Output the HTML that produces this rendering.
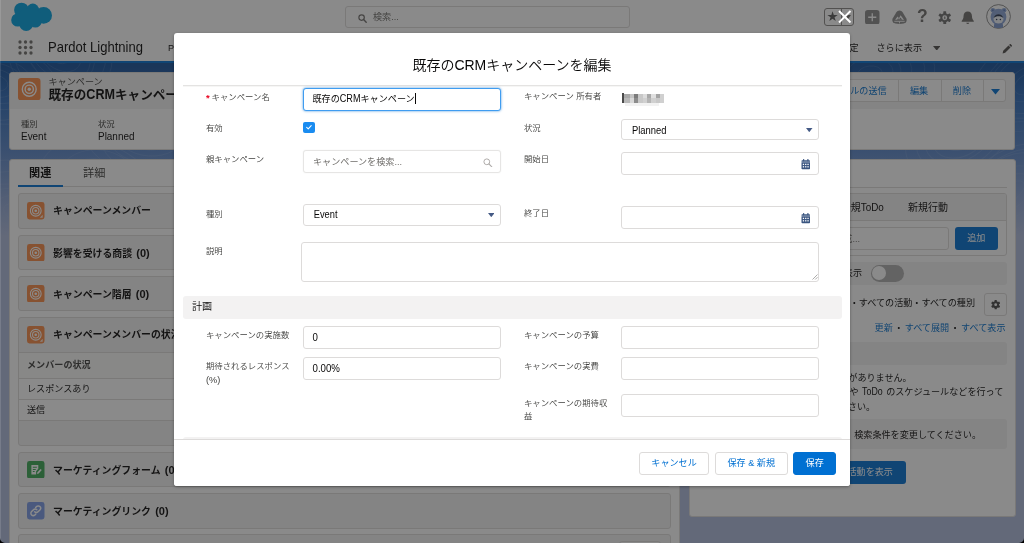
<!DOCTYPE html>
<html lang="ja">
<head>
<meta charset="utf-8">
<title>既存のCRMキャンペーンを編集</title>
<style>
*{box-sizing:border-box;margin:0;padding:0}
html,body{width:1024px;height:543px;overflow:hidden}
body{position:relative;background:#aebbdc;font-family:"Liberation Sans","Noto Sans CJK JP",sans-serif;color:#080707;font-size:9.1px;line-height:1.5}
.a{position:absolute;white-space:nowrap}
svg{display:block}
/* ---------- background page ---------- */
#page{position:absolute;left:0;top:0;width:1024px;height:543px;overflow:hidden;will-change:transform;font-weight:400}
#band{position:absolute;left:0;top:61px;width:1024px;height:482px;background:linear-gradient(to bottom,#16509a 0px,#16509a 6px,#2f6cba 40px,#5a86c8 90px,#8ea5d4 140px,#aebbdc 176px,#aebbdc 100%)}
#ghead{position:absolute;left:0;top:0;width:1024px;height:33px;background:#fff}
#nav{position:absolute;left:0;top:33px;width:1024px;height:30px;background:#fff;border-bottom:2.2px solid #0070d2}
.card{position:absolute;background:#fff;border-radius:3px;border:1px solid #dddbda}
.rl{position:absolute;left:18px;width:653px;background:#f3f2f2;border:1px solid #dddbda;border-radius:3px}
.rl .ic{position:absolute;left:8px;top:8px;width:17.5px;height:17.5px;border-radius:2.5px}
.rl .t{position:absolute;left:34px;top:9px;font-size:9.9px;word-spacing:1.5px;font-weight:700;line-height:16px;white-space:nowrap;color:#080707}
.lnk{color:#006dcc;font-weight:400}
.L{display:inline-block;transform:scaleY(1.12);transform-origin:0 78%}
/* ---------- modal ---------- */
#backdrop{position:absolute;left:0;top:0;width:1024px;height:543px;background:rgba(30,30,30,.52)}
#modal{will-change:transform;font-weight:350;position:absolute;left:174px;top:33px;width:676px;height:453px;background:#fff;border-radius:3px;overflow:hidden;box-shadow:0 1px 3px rgba(0,0,0,.35)}
.lab{position:absolute;font-size:8.4px;line-height:12.8px;color:#3e3e3c;white-space:nowrap}
.inp{font-weight:400;position:absolute;background:#fff;border:1px solid #dddbda;border-radius:3px;font-size:9.1px;line-height:20px;color:#080707;white-space:nowrap;padding-left:9px}
.btn{font-weight:400;position:absolute;top:419px;height:22.6px;border:1px solid #dddbda;border-radius:3px;background:#fff;color:#0070d2;font-size:9.1px;line-height:20.6px;text-align:center;white-space:nowrap}
</style>
</head>
<body>
<div id="page">
<div id="band"></div>
<svg class="a" style="left:0;top:63px;opacity:.085" width="1024" height="190" viewBox="0 0 1024 190"><defs><linearGradient id="fd" gradientUnits="userSpaceOnUse" x1="0" y1="0" x2="0" y2="190"><stop offset="0" stop-color="#fff"/><stop offset=".5" stop-color="#fff"/><stop offset="1" stop-color="#fff" stop-opacity="0"/></linearGradient></defs><g fill="none" stroke="url(#fd)" stroke-width=".9"><ellipse cx="-5" cy="20" rx="13" ry="8" transform="rotate(12 -5 20)"/><ellipse cx="-5" cy="20" rx="22" ry="14" transform="rotate(12 -5 20)"/><ellipse cx="-5" cy="20" rx="32" ry="20" transform="rotate(12 -5 20)"/><ellipse cx="-5" cy="20" rx="40" ry="26" transform="rotate(12 -5 20)"/><ellipse cx="-5" cy="20" rx="46" ry="37" transform="rotate(12 -5 20)"/><ellipse cx="-5" cy="20" rx="65" ry="40" transform="rotate(12 -5 20)"/><ellipse cx="60" cy="-10" rx="12" ry="10" transform="rotate(36 60 -10)"/><ellipse cx="60" cy="-10" rx="23" ry="16" transform="rotate(36 60 -10)"/><ellipse cx="60" cy="-10" rx="33" ry="24" transform="rotate(36 60 -10)"/><ellipse cx="60" cy="-10" rx="37" ry="29" transform="rotate(36 60 -10)"/><ellipse cx="60" cy="-10" rx="47" ry="44" transform="rotate(36 60 -10)"/><ellipse cx="60" cy="-10" rx="54" ry="49" transform="rotate(36 60 -10)"/><ellipse cx="150" cy="70" rx="15" ry="9" transform="rotate(4 150 70)"/><ellipse cx="150" cy="70" rx="24" ry="17" transform="rotate(4 150 70)"/><ellipse cx="150" cy="70" rx="34" ry="23" transform="rotate(4 150 70)"/><ellipse cx="150" cy="70" rx="44" ry="31" transform="rotate(4 150 70)"/><ellipse cx="150" cy="70" rx="51" ry="42" transform="rotate(4 150 70)"/><ellipse cx="150" cy="70" rx="66" ry="43" transform="rotate(4 150 70)"/><ellipse cx="100" cy="130" rx="15" ry="10" transform="rotate(30 100 130)"/><ellipse cx="100" cy="130" rx="26" ry="16" transform="rotate(30 100 130)"/><ellipse cx="100" cy="130" rx="33" ry="26" transform="rotate(30 100 130)"/><ellipse cx="100" cy="130" rx="40" ry="32" transform="rotate(30 100 130)"/><ellipse cx="100" cy="130" rx="47" ry="42" transform="rotate(30 100 130)"/><ellipse cx="100" cy="130" rx="66" ry="48" transform="rotate(30 100 130)"/><ellipse cx="20" cy="150" rx="17" ry="9" transform="rotate(16 20 150)"/><ellipse cx="20" cy="150" rx="26" ry="17" transform="rotate(16 20 150)"/><ellipse cx="20" cy="150" rx="39" ry="23" transform="rotate(16 20 150)"/><ellipse cx="20" cy="150" rx="47" ry="27" transform="rotate(16 20 150)"/><ellipse cx="20" cy="150" rx="57" ry="40" transform="rotate(16 20 150)"/><ellipse cx="20" cy="150" rx="72" ry="51" transform="rotate(16 20 150)"/><ellipse cx="700" cy="-5" rx="12" ry="9" transform="rotate(13 700 -5)"/><ellipse cx="700" cy="-5" rx="21" ry="15" transform="rotate(13 700 -5)"/><ellipse cx="700" cy="-5" rx="29" ry="26" transform="rotate(13 700 -5)"/><ellipse cx="700" cy="-5" rx="37" ry="29" transform="rotate(13 700 -5)"/><ellipse cx="700" cy="-5" rx="49" ry="43" transform="rotate(13 700 -5)"/><ellipse cx="700" cy="-5" rx="53" ry="46" transform="rotate(13 700 -5)"/><ellipse cx="780" cy="60" rx="14" ry="11" transform="rotate(26 780 60)"/><ellipse cx="780" cy="60" rx="24" ry="18" transform="rotate(26 780 60)"/><ellipse cx="780" cy="60" rx="36" ry="29" transform="rotate(26 780 60)"/><ellipse cx="780" cy="60" rx="40" ry="31" transform="rotate(26 780 60)"/><ellipse cx="780" cy="60" rx="49" ry="38" transform="rotate(26 780 60)"/><ellipse cx="780" cy="60" rx="62" ry="50" transform="rotate(26 780 60)"/><ellipse cx="870" cy="10" rx="12" ry="7" transform="rotate(-6 870 10)"/><ellipse cx="870" cy="10" rx="23" ry="15" transform="rotate(-6 870 10)"/><ellipse cx="870" cy="10" rx="31" ry="23" transform="rotate(-6 870 10)"/><ellipse cx="870" cy="10" rx="42" ry="26" transform="rotate(-6 870 10)"/><ellipse cx="870" cy="10" rx="55" ry="40" transform="rotate(-6 870 10)"/><ellipse cx="870" cy="10" rx="65" ry="49" transform="rotate(-6 870 10)"/><ellipse cx="960" cy="70" rx="13" ry="9" transform="rotate(-32 960 70)"/><ellipse cx="960" cy="70" rx="21" ry="16" transform="rotate(-32 960 70)"/><ellipse cx="960" cy="70" rx="30" ry="23" transform="rotate(-32 960 70)"/><ellipse cx="960" cy="70" rx="38" ry="27" transform="rotate(-32 960 70)"/><ellipse cx="960" cy="70" rx="47" ry="34" transform="rotate(-32 960 70)"/><ellipse cx="960" cy="70" rx="59" ry="39" transform="rotate(-32 960 70)"/><ellipse cx="1030" cy="20" rx="17" ry="10" transform="rotate(-28 1030 20)"/><ellipse cx="1030" cy="20" rx="26" ry="16" transform="rotate(-28 1030 20)"/><ellipse cx="1030" cy="20" rx="38" ry="28" transform="rotate(-28 1030 20)"/><ellipse cx="1030" cy="20" rx="45" ry="32" transform="rotate(-28 1030 20)"/><ellipse cx="1030" cy="20" rx="50" ry="35" transform="rotate(-28 1030 20)"/><ellipse cx="1030" cy="20" rx="62" ry="44" transform="rotate(-28 1030 20)"/><ellipse cx="1010" cy="130" rx="17" ry="8" transform="rotate(-38 1010 130)"/><ellipse cx="1010" cy="130" rx="25" ry="15" transform="rotate(-38 1010 130)"/><ellipse cx="1010" cy="130" rx="33" ry="23" transform="rotate(-38 1010 130)"/><ellipse cx="1010" cy="130" rx="49" ry="34" transform="rotate(-38 1010 130)"/><ellipse cx="1010" cy="130" rx="57" ry="35" transform="rotate(-38 1010 130)"/><ellipse cx="1010" cy="130" rx="62" ry="40" transform="rotate(-38 1010 130)"/><ellipse cx="900" cy="140" rx="16" ry="10" transform="rotate(22 900 140)"/><ellipse cx="900" cy="140" rx="27" ry="19" transform="rotate(22 900 140)"/><ellipse cx="900" cy="140" rx="37" ry="26" transform="rotate(22 900 140)"/><ellipse cx="900" cy="140" rx="48" ry="34" transform="rotate(22 900 140)"/><ellipse cx="900" cy="140" rx="51" ry="40" transform="rotate(22 900 140)"/><ellipse cx="900" cy="140" rx="62" ry="40" transform="rotate(22 900 140)"/><ellipse cx="690" cy="120" rx="10" ry="8" transform="rotate(-19 690 120)"/><ellipse cx="690" cy="120" rx="20" ry="17" transform="rotate(-19 690 120)"/><ellipse cx="690" cy="120" rx="32" ry="26" transform="rotate(-19 690 120)"/><ellipse cx="690" cy="120" rx="38" ry="28" transform="rotate(-19 690 120)"/><ellipse cx="690" cy="120" rx="45" ry="35" transform="rotate(-19 690 120)"/><ellipse cx="690" cy="120" rx="53" ry="48" transform="rotate(-19 690 120)"/><ellipse cx="740" cy="170" rx="17" ry="11" transform="rotate(-2 740 170)"/><ellipse cx="740" cy="170" rx="25" ry="19" transform="rotate(-2 740 170)"/><ellipse cx="740" cy="170" rx="39" ry="28" transform="rotate(-2 740 170)"/><ellipse cx="740" cy="170" rx="48" ry="34" transform="rotate(-2 740 170)"/><ellipse cx="740" cy="170" rx="51" ry="45" transform="rotate(-2 740 170)"/><ellipse cx="740" cy="170" rx="62" ry="53" transform="rotate(-2 740 170)"/></g></svg>
<!-- ===== global header ===== -->
<div id="ghead">

<svg class="a" style="left:6px;top:0" width="52" height="34" viewBox="6 0 52 34"><g fill="#00a1e0"><circle cx="21.500" cy="10.100" r="7.400"/><circle cx="32.800" cy="9.800" r="6.200"/><circle cx="43.600" cy="15.400" r="8.400"/><circle cx="17.800" cy="20" r="6.600"/><circle cx="26.200" cy="24.300" r="6.800"/><circle cx="35.400" cy="21.200" r="6.300"/><ellipse cx="30" cy="17" rx="12" ry="8.500"/></g></svg>
<div class="a" style="left:345px;top:6px;width:285px;height:22px;border:1px solid #dddbda;border-radius:3px;background:#fff"></div>
<svg class="a" style="left:357.5px;top:13.5px" width="9" height="9" viewBox="0 0 9 9"><circle cx="3.6" cy="3.6" r="2.7" fill="none" stroke="#706e6b" stroke-width="1.2"/><path d="M5.6 5.6L8.2 8.2" stroke="#706e6b" stroke-width="1.4" stroke-linecap="round"/></svg>
<div class="a" style="left:373px;top:10px;font-size:9.1px;line-height:14px;color:#706e6b">検索...</div>
<!-- favorites -->
<div class="a" style="left:824px;top:8px;width:30px;height:17.5px;border:1px solid #8a8886;border-radius:3px"></div>
<div class="a" style="left:826.500px;top:8.300px;font-size:13.500px;line-height:16px;color:#5a5a5a;font-family:'DejaVu Sans',sans-serif">★</div>
<div class="a" style="left:841px;top:8px;width:1px;height:17.5px;background:#8a8886"></div>
<svg class="a" style="left:845px;top:14.5px" width="6" height="4" viewBox="0 0 6 4"><path d="M0 0h6L3 4z" fill="#706e6b"/></svg>
<!-- plus -->
<svg class="a" style="left:865px;top:9.5px" width="14.5" height="14.5" viewBox="0 0 14.5 14.5"><rect width="14.5" height="14.5" rx="2.8" fill="#8a8a8a"/><path d="M7.25 3.2v8.100M3.200 7.250h8.100" stroke="#fff" stroke-width="1.300"/></svg>
<!-- trailhead -->
<svg class="a" style="left:892px;top:10px" width="15" height="14.500" viewBox="0 0 15 14.500"><path d="M7.500 .4c1.300 0 2.300.7 3.100 1.900l3.600 5.900c1.200 2.100.1 4.800-2.500 5.300-2.800.5-5.600.5-8.400 0C.7 13 -.4 10.300.8 8.200l3.600-5.900C5.200 1.100 6.200.4 7.500.4z" fill="#8a8a8a"/><path d="M3.100 9.800l2.500-3.300 1.400 1.700 1.600-2.900 3.400 4.500z" fill="#fff"/><path d="M4.900 9.800l1.300-1.500.9 1 1.400-1.900 1.700 2.400z" fill="#8a8a8a"/><path d="M2.300 11.300h10.400" stroke="#fff" stroke-width=".9"/><path d="M7.500 11.500v2" stroke="#fff" stroke-width=".8"/></svg>
<!-- help -->
<div class="a" style="left:917px;top:5px;font-size:17.5px;line-height:22px;color:#706e6b;font-weight:700">?</div>
<!-- gear -->
<svg class="a" style="left:938px;top:10.500px" width="13.500" height="13.500" viewBox="-7 -7 14 14"><g fill="#707070"><circle r="4.600"/><g id="tt"><rect x="-1.500" y="-6.800" width="3" height="13.600" rx=".6"/></g><use href="#tt" transform="rotate(60)"/><use href="#tt" transform="rotate(120)"/></g><circle r="2.500" fill="#fff"/><path d="M0 -1.500v3M-.9 .2h1.800" stroke="#706e6b" stroke-width=".8"/></svg>
<!-- bell -->
<svg class="a" style="left:960.500px;top:10.500px" width="13.500" height="14" viewBox="0 0 13.500 14"><path d="M6.750 .6c-2.600 0-4.200 2-4.200 4.500 0 2.700-.9 3.900-1.900 4.800-.3.300-.1.900.4.900h11.400c.5 0 .7-.6.4-.9-1-.9-1.900-2.100-1.900-4.800 0-2.500-1.600-4.500-4.200-4.500z" fill="#706e6b"/><path d="M5.200 11.800a1.600 1.600 0 0 0 3.100 0z" fill="#706e6b"/></svg>
<!-- avatar -->
<svg class="a" style="left:986px;top:3.500px" width="25" height="25" viewBox="0 0 25 25"><defs><clipPath id="avc"><circle cx="12.500" cy="12.500" r="11.600"/></clipPath></defs><circle cx="12.500" cy="12.500" r="11.900" fill="#fff" stroke="#6e6e6e" stroke-width=".8"/><g clip-path="url(#avc)"><circle cx="6.900" cy="6.300" r="2.300" fill="#8aa4d6"/><circle cx="18.100" cy="6.300" r="2.300" fill="#8aa4d6"/><circle cx="6.900" cy="6.300" r="1" fill="#5f7cb6"/><circle cx="18.100" cy="6.300" r="1" fill="#5f7cb6"/><ellipse cx="12.500" cy="13" rx="7.900" ry="8.200" fill="#8aa4d6"/><rect x="8" y="19" width="9" height="6" rx="2" fill="#7b97cc"/><ellipse cx="12.500" cy="15" rx="5" ry="4.500" fill="#eef2f9"/><path d="M7.600 14.200c.6-2.700 2.500-4 4.900-4s4.300 1.300 4.900 4c-1.300-1.300-3-1.900-4.900-1.900s-3.600.6-4.900 1.900z" fill="#26344f"/><circle cx="10.600" cy="15.600" r=".75" fill="#26344f"/><circle cx="14.400" cy="15.600" r=".75" fill="#26344f"/></g></svg>

</div>
<!-- ===== nav ===== -->
<div id="nav">

<svg class="a" style="left:17.500px;top:6.800px" width="15" height="15" viewBox="0 0 15 15"><g fill="#706e6b"><circle cx="2" cy="2" r="1.650"/><circle cx="7.500" cy="2" r="1.650"/><circle cx="13" cy="2" r="1.650"/><circle cx="2" cy="7.500" r="1.650"/><circle cx="7.500" cy="7.500" r="1.650"/><circle cx="13" cy="7.500" r="1.650"/><circle cx="2" cy="13" r="1.650"/><circle cx="7.500" cy="13" r="1.650"/><circle cx="13" cy="13" r="1.650"/></g></svg>
<div class="a" id="appname" style="left:48px;top:5px;font-size:13.050px;line-height:20px;color:#080707"><span class="L" style="transform:scaleY(1.07)">Pardot Lightning</span></div>
<div class="a" style="left:168px;top:8px;font-size:9.1px;line-height:14px;color:#080707">P</div>
<div class="a" style="left:840.500px;top:8px;font-size:9.1px;line-height:14px;color:#080707">設定</div>
<div class="a" style="left:876.500px;top:8px;font-size:9.1px;line-height:14px;color:#080707">さらに表示</div>
<svg class="a" style="left:932.500px;top:12.500px" width="7.500" height="4.600" viewBox="0 0 7.500 4.600"><path d="M0 0h7.500L3.750 4.600z" fill="#514f4d"/></svg>
<svg class="a" style="left:1002px;top:10.500px" width="10" height="10" viewBox="0 0 10 10"><path d="M.6 9.400l.6-2.600 5.300-5.300 2 2-5.300 5.300zM7.100 .9l.700-.7c.3-.3.700-.3 1 0l1 1c.3.300.3.700 0 1l-.7.700z" fill="#514f4d"/></svg>

</div>

<!-- ===== record header ===== -->
<div class="card" style="left:9px;top:72px;width:1006px;height:78px;overflow:hidden">
<div class="a" style="left:0;top:0;width:1006px;height:36px;background:#f3f2f2"></div>
<div class="a" style="left:8px;top:4.500px"><svg width="22.500" height="22.500" viewBox="0 0 24 24"><rect width="24" height="24" rx="3.4" fill="#f98a45"/><g fill="none" stroke="#fff" stroke-width="1.500"><circle cx="12" cy="12" r="7.400"/><circle cx="12" cy="12" r="4.400"/></g><circle cx="12" cy="12" r="1.800" fill="#fff"/></svg></div>
<div class="a" style="left:38.500px;top:3px;font-size:9.1px;line-height:13px;color:#3e3e3c">キャンペーン</div>
<div class="a" style="left:38.500px;top:12.500px;font-size:12.6px;line-height:19px;font-weight:700;color:#080707">既存の<span class="L">CRM</span>キャンペーン</div>
<div class="a" style="left:790px;top:5.500px;width:206px;height:23.500px;border:1px solid #dddbda;border-radius:3px;background:#fff"></div>
<div class="a lnk" style="left:822px;top:10.800px;font-size:9.1px;line-height:14px">メールの送信</div>
<div class="a" style="left:887.500px;top:6px;width:1px;height:22.500px;background:#dddbda"></div>
<div class="a lnk" style="left:900px;top:10.800px;font-size:9.1px;line-height:14px">編集</div>
<div class="a" style="left:930.500px;top:6px;width:1px;height:22.500px;background:#dddbda"></div>
<div class="a lnk" style="left:942.800px;top:10.800px;font-size:9.1px;line-height:14px">削除</div>
<div class="a" style="left:973px;top:6px;width:1px;height:22.500px;background:#dddbda"></div>
<svg class="a" style="left:981px;top:16px" width="9" height="5.600" viewBox="0 0 9 5.600"><path d="M0 0h9L4.500 5.600z" fill="#0070d2"/></svg>
<div class="a" style="left:11px;top:44.500px;font-size:8.4px;line-height:12px;color:#3e3e3c">種別</div>
<div class="a" style="left:11px;top:57px;font-size:9.950px;line-height:14px;color:#080707"><span class="L">Event</span></div>
<div class="a" style="left:88px;top:44.500px;font-size:8.4px;line-height:12px;color:#3e3e3c">状況</div>
<div class="a" style="left:88px;top:57px;font-size:9.950px;line-height:14px;color:#080707"><span class="L">Planned</span></div>
</div>


<!-- ===== left column ===== -->
<div class="card" style="left:9px;top:159px;width:671px;height:400px"></div>
<div class="a" style="left:18px;top:186px;width:653px;height:1px;background:#dddbda"></div>
<div class="a" style="left:18px;top:184.600px;width:44.500px;height:2.100px;background:#0070d2"></div>
<div class="a" style="left:29px;top:165px;font-size:11.2px;line-height:17px;font-weight:700;color:#080707">関連</div>
<div class="a" style="left:83px;top:165px;font-size:11.2px;line-height:17px;color:#3e3e3c">詳細</div>
<div class="rl" style="top:193px;height:35.5px"><div class="ic"><svg width="17.500" height="17.500" viewBox="0 0 24 24"><rect width="24" height="24" rx="3.4" fill="#f98a45"/><g fill="none" stroke="#fff" stroke-width="1.500"><circle cx="12" cy="12" r="7.400"/><circle cx="12" cy="12" r="4.400"/></g><circle cx="12" cy="12" r="1.800" fill="#fff"/><path d="M17.500 21.500l4-4v4z" fill="#fff" opacity=".85"/></svg></div><div class="t">キャンペーンメンバー</div></div>
<div class="rl" style="top:234.8px;height:35.5px"><div class="ic"><svg width="17.500" height="17.500" viewBox="0 0 24 24"><rect width="24" height="24" rx="3.4" fill="#f98a45"/><g fill="none" stroke="#fff" stroke-width="1.500"><circle cx="12" cy="12" r="7.400"/><circle cx="12" cy="12" r="4.400"/></g><circle cx="12" cy="12" r="1.800" fill="#fff"/></svg></div><div class="t">影響を受ける商談 <span style="font-size:11px">(0)</span></div></div>
<div class="rl" style="top:275.8px;height:35.5px"><div class="ic"><svg width="17.500" height="17.500" viewBox="0 0 24 24"><rect width="24" height="24" rx="3.4" fill="#f98a45"/><g fill="none" stroke="#fff" stroke-width="1.500"><circle cx="12" cy="12" r="7.400"/><circle cx="12" cy="12" r="4.400"/></g><circle cx="12" cy="12" r="1.800" fill="#fff"/></svg></div><div class="t">キャンペーン階層 <span style="font-size:11px">(0)</span></div></div>
<div class="rl" style="top:317px;height:128.5px"><div class="ic"><svg width="17.500" height="17.500" viewBox="0 0 24 24"><rect width="24" height="24" rx="3.4" fill="#f98a45"/><g fill="none" stroke="#fff" stroke-width="1.500"><circle cx="12" cy="12" r="7.400"/><circle cx="12" cy="12" r="4.400"/></g><circle cx="12" cy="12" r="1.800" fill="#fff"/><path d="M17.500 21.500l4-4v4z" fill="#fff" opacity=".85"/></svg></div><div class="t">キャンペーンメンバーの状況</div><div class="a" style="left:0;top:34.300px;width:651px;height:26.700px;border-top:1px solid #dddbda;background:#fafaf9"></div>
<div class="a" style="left:8px;top:40.300px;font-size:9.1px;line-height:14px;font-weight:700;color:#3e3e3c">メンバーの状況</div>
<div class="a" style="left:0;top:60.300px;width:651px;height:21.700px;border-top:1px solid #dddbda;background:#fff"></div>
<div class="a" style="left:8px;top:63.800px;font-size:9.1px;line-height:14px;color:#080707">レスポンスあり</div>
<div class="a" style="left:0;top:81.300px;width:651px;height:21.700px;border-top:1px solid #dddbda;background:#fff"></div>
<div class="a" style="left:8px;top:84.800px;font-size:9.1px;line-height:14px;color:#080707">送信</div>
<div class="a" style="left:0;top:102px;width:651px;height:1px;background:#dddbda"></div></div>
<div class="rl" style="top:451.8px;height:35.5px"><div class="ic"><svg width="17.500" height="17.500" viewBox="0 0 24 24"><rect width="24" height="24" rx="3.400" fill="#3ba755"/><path d="M6 5.500h9.500v5l-3 3.500v4.500H6z" fill="#fff"/><path d="M8 8.500h5.500M8 11.500h4M8 14.500h2.500" stroke="#3ba755" stroke-width="1.400"/><path d="M13.800 17.800l.5-2.300 4.200-4.600 1.700 1.600-4.200 4.600z" fill="#fff"/></svg></div><div class="t">マーケティングフォーム <span style="font-size:11px">(0)</span></div></div>
<div class="rl" style="top:493px;height:35.5px"><div class="ic"><svg width="17.500" height="17.500" viewBox="0 0 24 24"><rect width="24" height="24" rx="3.400" fill="#7a9ae6"/><g fill="none" stroke="#fff" stroke-width="2" stroke-linecap="round"><path d="M10.500 13.500a3.200 3.200 0 0 0 4.600 0l2.600-2.600a3.200 3.200 0 0 0-4.600-4.600l-1.200 1.200"/><path d="M13.500 10.500a3.200 3.200 0 0 0-4.600 0l-2.600 2.600a3.200 3.200 0 0 0 4.600 4.600l1.200-1.200"/></g></svg></div><div class="t">マーケティングリンク <span style="font-size:11px">(0)</span></div></div>
<div class="rl" style="top:534.3px;height:35.5px"><div class="ic"></div><div class="t"></div></div>


<div class="a" style="left:619px;top:541px;width:42px;height:12px;border:1px solid #dddbda;border-radius:3px;background:#fff"></div>
<!-- ===== right column ===== -->
<div class="card" style="left:689px;top:159px;width:327px;height:357.5px"></div>
<div class="a" style="left:699px;top:187px;width:308px;height:1px;background:#dddbda"></div>
<div class="a" style="left:699px;top:193px;width:308px;height:62.500px;border:1px solid #dddbda;border-radius:3px;background:#fff;overflow:hidden">
<div class="a" style="left:0;top:0;width:306px;height:27px;background:#f3f2f2;border-bottom:1px solid #dddbda"></div>
<div class="a" style="left:140.800px;top:6.500px;font-size:10px;line-height:14px;color:#080707">新規<span class="L" style="font-size:9.9px;transform:scaleY(1.18)">ToDo</span></div>
<div class="a" style="left:208px;top:6.500px;font-size:10px;line-height:14px;color:#080707">新規行動</div>
<div class="a" style="left:8px;top:33px;width:241px;height:22.500px;border:1px solid #dddbda;border-radius:3px;background:#fff"></div>
<div class="a" style="right:146px;top:38px;font-size:9.1px;line-height:14px;color:#706e6b">ToDo を作成...</div>
<div class="a" style="left:255px;top:33px;width:42.500px;height:22.500px;border-radius:3px;background:#0070d2;color:#fff;font-size:9.1px;line-height:22.500px;text-align:center">追加</div>
</div>
<div class="a" style="left:699px;top:262px;width:308px;height:22.500px;border-radius:3px;background:#f3f2f2"></div>
<div class="a" style="right:162px;top:266px;font-size:9.1px;line-height:14px;color:#080707">検索条件を表示</div>
<div class="a" style="left:870.500px;top:264.800px;width:33.500px;height:16.800px;border-radius:9px;background:#adadad"></div>
<div class="a" style="left:872px;top:266.300px;width:13.800px;height:13.800px;border-radius:7px;background:#fff"></div>
<div class="a" style="right:49px;top:296px;font-size:9.1px;line-height:14px;color:#080707">検索条件: 常時・すべての活動・すべての種別</div>
<div class="a" style="left:983.800px;top:293.300px;width:23.200px;height:22.700px;border:1px solid #dddbda;border-radius:3px;background:#fff"></div>
<svg class="a" style="left:990.800px;top:300.300px" width="9.400" height="9.400" viewBox="-7 -7 14 14"><g fill="#4a4a4a"><circle r="5"/><rect x="-1.700" y="-6.900" width="3.400" height="13.800" rx=".8"/><rect x="-1.700" y="-6.900" width="3.400" height="13.800" rx=".8" transform="rotate(60)"/><rect x="-1.700" y="-6.900" width="3.400" height="13.800" rx=".8" transform="rotate(120)"/></g><circle r="2.100" fill="#fff"/></svg>
<div class="a" style="right:18.500px;top:320.500px;font-size:9.1px;line-height:14px;color:#080707"><span class="lnk">更新</span><span style="margin:0 1.4px">・</span><span class="lnk">すべて展開</span><span style="margin:0 1.4px">・</span><span class="lnk">すべて表示</span></div>
<div class="a" style="left:699px;top:342px;width:308px;height:22.500px;border-radius:3px;background:#f3f2f2"></div>
<div class="a" style="right:112.300px;top:372px;font-size:9.1px;line-height:13px;color:#080707">今後の活動がありません。</div>
<div class="a" style="right:20.700px;top:386.200px;font-size:9.1px;line-height:13px;color:#080707;word-spacing:1px">開始するには、メールの送信や <span class="L" style="font-size:8.8px;transform:scaleY(1.15)">ToDo</span> のスケジュールなどを行って</div>
<div class="a" style="right:148.900px;top:400.500px;font-size:9.1px;line-height:13px;color:#080707">ください。</div>
<div class="a" style="left:699px;top:418.500px;width:308px;height:30.500px;border-radius:3px;background:#f3f2f2"></div>
<div class="a" style="right:43px;top:427.800px;font-size:9.1px;line-height:14px;color:#080707;">過去の活動はありません。表示するには、検索条件を変更してください。</div>
<div class="a" style="left:799.500px;top:461px;width:106px;height:22.700px;border-radius:3px;background:#0070d2;color:#fff;font-size:9.1px;line-height:22.700px;text-align:center">すべての活動を表示</div>

</div>
<div id="backdrop"></div>

<svg class="a" style="left:838px;top:9.500px" width="13.500" height="13.500" viewBox="0 0 13.500 13.500"><path d="M1 1l11.500 11.500M12.500 1L1 12.500" stroke="#fff" stroke-width="1.900" stroke-linecap="butt"/></svg>

<div id="modal">

<div class="a" style="left:0;top:22px;width:676px;text-align:center;font-size:14px;line-height:20px;color:#080707">既存の<span class="L" style="transform:scaleY(1.04)">CRM</span>キャンペーンを編集</div>
<div class="a" style="left:9px;top:52px;width:659px;height:1px;background:#e4e3e2"></div><div class="a" style="left:9px;top:53px;width:659px;height:1px;background:#f6f6f5"></div>
<!-- row 1 -->
<div class="a" style="left:32px;top:59px;font-size:9.5px;line-height:12.800px;color:#ea001e;font-weight:700">*</div>
<div class="lab" style="left:37.600px;top:57.500px">キャンペーン名</div>
<div class="inp" style="left:129px;top:55px;width:198px;height:22.500px;line-height:20.600px;padding-left:8.500px;border-color:#3f9cf0;box-shadow:0 0 2.500px rgba(0,112,210,.75)">既存の<span class="L">CRM</span>キャンペーン<span style="display:inline-block;width:1px;height:11.500px;background:#080707;vertical-align:-2px;margin-left:.5px"></span></div>
<div class="lab" style="left:350px;top:57.400px">キャンペーン 所有者</div>
<div class="a" style="left:447.400px;top:60.200px;width:44px;height:13px;filter:blur(.4px)">
<div class="a" style="left:1.00px;top:0;width:1.4px;height:9.4px;background:#4a4a4a"></div>
<div class="a" style="left:2.50px;top:.6px;width:5.94px;height:8.800px;background:linear-gradient(#a8a8a8 50%,#b8b8b8 50%)"></div>
<div class="a" style="left:8.44px;top:.6px;width:4.06px;height:8.800px;background:linear-gradient(#c4c4c4 50%,#d8d8d8 50%)"></div>
<div class="a" style="left:12.50px;top:.6px;width:4.06px;height:8.800px;background:linear-gradient(#7c7c7c 50%,#8c8c8c 50%)"></div>
<div class="a" style="left:16.56px;top:.6px;width:5.00px;height:8.800px;background:linear-gradient(#c8c8c8 50%,#c8c8c8 50%)"></div>
<div class="a" style="left:21.56px;top:.6px;width:4.06px;height:8.800px;background:linear-gradient(#dcdcdc 50%,#d0d0d0 50%)"></div>
<div class="a" style="left:25.62px;top:.6px;width:4.06px;height:8.800px;background:linear-gradient(#a8a8a8 50%,#b4b4b4 50%)"></div>
<div class="a" style="left:29.69px;top:.6px;width:4.69px;height:8.800px;background:linear-gradient(#e0e0e0 50%,#d0d0d0 50%)"></div>
<div class="a" style="left:34.38px;top:.6px;width:4.06px;height:8.800px;background:linear-gradient(#a4a4a4 50%,#c8c8c8 50%)"></div>
<div class="a" style="left:38.44px;top:.6px;width:4.06px;height:8.800px;background:linear-gradient(#d0d0d0 50%,#d0d0d0 50%)"></div>
<div class="a" style="left:4px;top:10px;width:34px;height:2.500px;background:#f2f2f2"></div>
</div>
<!-- row 2 -->
<div class="lab" style="left:32px;top:88.500px">有効</div>
<div class="a" style="left:129px;top:88.700px;width:11.500px;height:11.500px;border-radius:2px;background:#1a8cf0"></div>
<svg class="a" style="left:131.900px;top:92.200px" width="5.800" height="4.600" viewBox="0 0 7 5.600"><path d="M.8 2.900l1.900 1.800L6.300 .8" fill="none" stroke="#fff" stroke-width="1.250" stroke-linecap="round" stroke-linejoin="round"/></svg>
<div class="lab" style="left:350px;top:88.600px">状況</div>
<div class="inp" style="left:447px;top:86.200px;width:198px;height:21.300px;line-height:21.600px;padding-left:10px;font-size:9.4px"><span class="L">Planned</span></div>
<svg class="a" style="left:632px;top:94.600px" width="6.500" height="4.200" viewBox="0 0 6.500 4.200"><path d="M0 0h6.500L3.250 4.200z" fill="#445a85"/></svg>
<!-- row 3 -->
<div class="lab" style="left:32px;top:120.400px">親キャンペーン</div>
<div class="inp" style="left:129px;top:117px;width:198px;height:23px;line-height:22px;color:#706e6b;border-color:#e6e5e4;box-shadow:0 0 1.500px rgba(0,0,0,.08)">キャンペーンを検索...</div>
<svg class="a" style="left:309px;top:124.500px" width="9.500" height="9.500" viewBox="0 0 9.500 9.500"><circle cx="3.800" cy="3.800" r="2.900" fill="none" stroke="#b0adab" stroke-width="1"/><path d="M6 6l2.800 2.800" stroke="#b0adab" stroke-width="1.100" stroke-linecap="round"/></svg>
<div class="lab" style="left:350px;top:119.800px">開始日</div>
<div class="inp" style="left:447px;top:119px;width:198px;height:22.500px"></div>
<svg class="a" style="left:626.700px;top:126.400px" width="9.500" height="10.500" viewBox="0 0 19 21"><path d="M1 6.500h17V19a1.500 1.500 0 0 1-1.500 1.500h-14A1.500 1.500 0 0 1 1 19z" fill="#3a5580"/><path d="M1 5.500V4A1.500 1.500 0 0 1 2.500 2.500h14A1.500 1.500 0 0 1 18 4v1.500z" fill="#3a5580"/><rect x="4" y="0" width="2.400" height="4.500" rx="1" fill="#3a5580"/><rect x="12.600" y="0" width="2.400" height="4.500" rx="1" fill="#3a5580"/><g fill="#fff"><rect x="3.600" y="9.500" width="2.600" height="2.600"/><rect x="8.200" y="9.500" width="2.600" height="2.600"/><rect x="12.800" y="9.500" width="2.600" height="2.600"/><rect x="3.600" y="14.300" width="2.600" height="2.600"/><rect x="8.200" y="14.300" width="2.600" height="2.600"/><rect x="12.800" y="14.300" width="2.600" height="2.600"/></g></svg>
<!-- row 4 -->
<div class="lab" style="left:32px;top:174.500px">種別</div>
<div class="inp" style="left:129px;top:171px;width:198px;height:22px;line-height:21.600px;padding-left:9.700px;font-size:9.3px"><span class="L">Event</span></div>
<svg class="a" style="left:313.800px;top:180.200px" width="6.500" height="4.200" viewBox="0 0 6.500 4.200"><path d="M0 0h6.500L3.250 4.200z" fill="#445a85"/></svg>
<div class="lab" style="left:350px;top:174.100px">終了日</div>
<div class="inp" style="left:447px;top:173px;width:198px;height:22.500px"></div>
<svg class="a" style="left:626.700px;top:180.400px" width="9.500" height="10.500" viewBox="0 0 19 21"><path d="M1 6.500h17V19a1.500 1.500 0 0 1-1.500 1.500h-14A1.500 1.500 0 0 1 1 19z" fill="#3a5580"/><path d="M1 5.500V4A1.500 1.500 0 0 1 2.500 2.500h14A1.500 1.500 0 0 1 18 4v1.500z" fill="#3a5580"/><rect x="4" y="0" width="2.400" height="4.500" rx="1" fill="#3a5580"/><rect x="12.600" y="0" width="2.400" height="4.500" rx="1" fill="#3a5580"/><g fill="#fff"><rect x="3.600" y="9.500" width="2.600" height="2.600"/><rect x="8.200" y="9.500" width="2.600" height="2.600"/><rect x="12.800" y="9.500" width="2.600" height="2.600"/><rect x="3.600" y="14.300" width="2.600" height="2.600"/><rect x="8.200" y="14.300" width="2.600" height="2.600"/><rect x="12.800" y="14.300" width="2.600" height="2.600"/></g></svg>
<!-- row 5 -->
<div class="lab" style="left:32px;top:211.600px">説明</div>
<div class="inp" style="left:127.300px;top:209px;width:517.700px;height:39.500px"></div>
<svg class="a" style="left:637.500px;top:241px" width="6" height="6" viewBox="0 0 6 6"><path d="M5.500 .5l-5 5M5.500 3.200L3.200 5.500" stroke="#8a8886" stroke-width=".7"/></svg>
<!-- section -->
<div class="a" style="left:9px;top:263.200px;width:659px;height:23px;border-radius:3px;background:#f3f2f2"></div>
<div class="a" style="left:18px;top:263.300px;font-size:10.1px;line-height:22.500px;color:#080707">計画</div>
<div class="lab" style="left:32px;top:296.300px">キャンペーンの実施数</div>
<div class="inp" style="left:129px;top:293px;width:198px;height:23px;padding-left:8.500px;font-size:9.7px;line-height:21.600px"><span class="L">0</span></div>
<div class="lab" style="left:350px;top:295.900px">キャンペーンの予算</div>
<div class="inp" style="left:447px;top:293px;width:198px;height:23px"></div>
<div class="lab" style="left:32px;top:327.200px;line-height:13.800px">期待されるレスポンス<br><span style="font-size:9.2px">(%)</span></div>
<div class="inp" style="left:129px;top:324px;width:198px;height:23px;padding-left:8.500px;font-size:9.7px;line-height:22px"><span class="L">0.00%</span></div>
<div class="lab" style="left:350px;top:327.100px">キャンペーンの実費</div>
<div class="inp" style="left:447px;top:324px;width:198px;height:23px"></div>
<div class="lab" style="left:350px;top:364.200px;line-height:13px">キャンペーンの期待収<br>益</div>
<div class="inp" style="left:447px;top:361px;width:198px;height:23px"></div>
<div class="a" style="left:9px;top:403.500px;width:659px;height:10px;border-radius:3px;background:#f3f2f2"></div>
<!-- footer -->
<div class="a" style="left:0;top:406.300px;width:676px;height:47px;background:#fff;border-top:1.400px solid #dddbda"></div>
<div class="btn" style="left:465.300px;width:69.500px">キャンセル</div>
<div class="btn" style="left:541px;width:72.500px">保存 &amp; 新規</div>
<div class="btn" style="left:619.300px;width:42.700px;background:#0070d2;border-color:#0070d2;color:#fff">保存</div>

</div>

<div class="a" style="left:0;top:0;width:1px;height:543px;background:rgba(255,255,255,.12)"></div>
<svg class="a" style="left:0;top:538px" width="5" height="5" viewBox="0 0 6 6"><path d="M0 0A6 6 0 0 0 6 6H0z" fill="#000"/></svg>
<svg class="a" style="left:1019px;top:538px" width="5" height="5" viewBox="0 0 6 6"><path d="M6 0A6 6 0 0 1 0 6H6z" fill="#000"/></svg>

</body>
</html>
